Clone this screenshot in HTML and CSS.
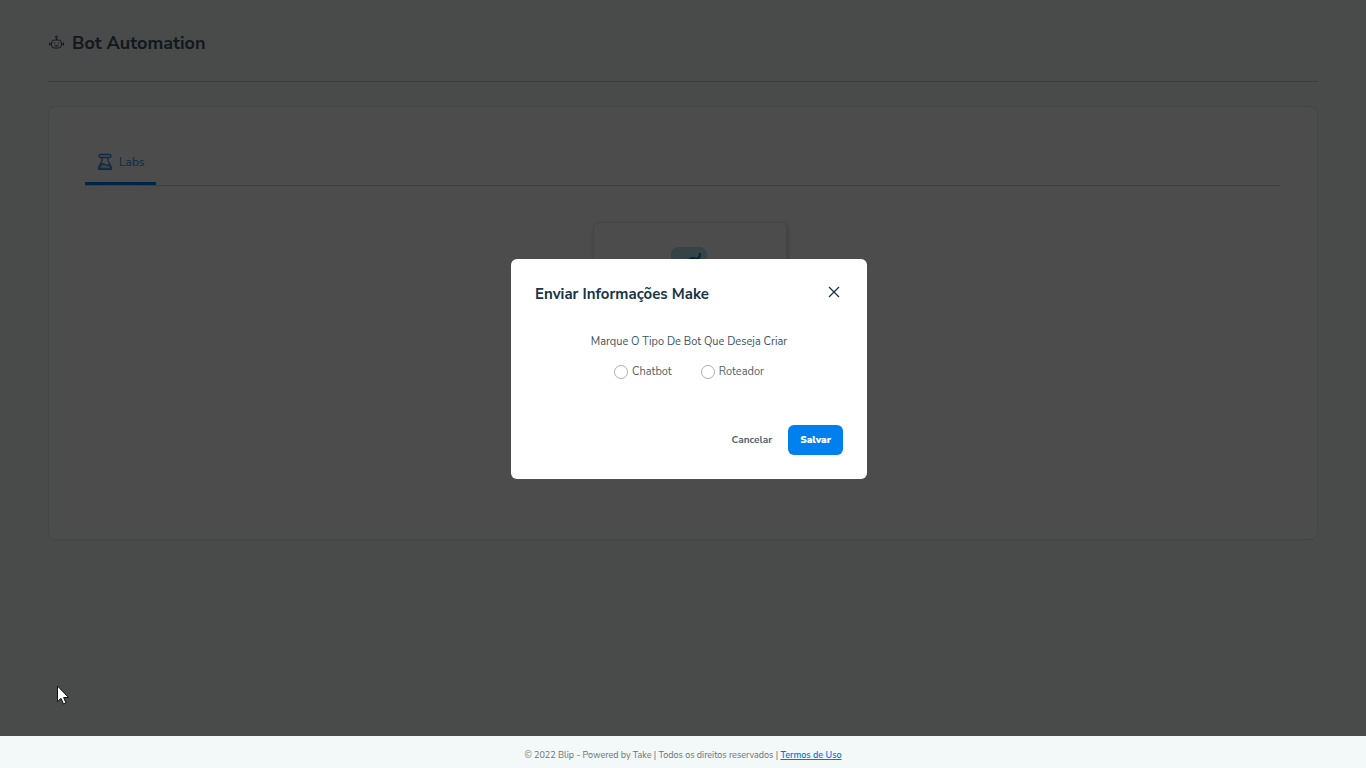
FILE: index.html
```html
<!DOCTYPE html>
<html lang="pt-BR">
<head>
<meta charset="utf-8">
<meta name="viewport" content="width=device-width, initial-scale=1">
<title>Bot Automation</title>
<link rel="stylesheet" href="styles.css">
</head>
<body>
<div class="page">
  <main class="content">
    <header class="page-header">
      <svg class="robot" viewBox="0 0 16 16" fill="none" stroke="currentColor" aria-hidden="true">
        <rect x="3" y="5" width="10" height="8" rx="3"/>
        <path d="M8 5V3M1 7.500v3M15 7.500v3M1 9h2M13 9h2M6 10.800h4"/>
        <circle cx="8" cy="2" r="1"/>
        <path d="M6 7.500v1.200M10 7.500v1.200"/>
      </svg>
      <h1 class="page-title">Bot Automation</h1>
    </header>
    <section class="panel">
      <nav class="tabs">
        <a class="tab" href="#labs">
          <svg class="flask" viewBox="0 0 16 18" fill="none" stroke="currentColor" stroke-width="1.300" aria-hidden="true">
            <rect x="2" y="1.500" width="12" height="3" rx="1.500"/>
            <path d="M5 4.500v3L1.600 14.500Q1 16.300 2.800 16.300H13.200Q15 16.300 14.400 14.500L11 7.500V4.500"/>
            <path d="M4 11.500Q6 10 8 11.500T12.500 11.500L14 16H2Z" fill="currentColor" fill-opacity=".3"/>
          </svg>
          <span>Labs</span>
        </a>
      </nav>
      <div class="labs" id="labs">
        <article class="lab-card">
          <svg class="lab-icon" viewBox="0 0 38 38" fill="none" aria-hidden="true">
            <rect class="lab-icon-bg" width="36" height="36" rx="7"/>
            <path d="M15 15Q21 9 25 12Q29 12 29 6M15 13Q18 12 20 13" stroke="currentColor" stroke-width="2"/>
          </svg>
        </article>
      </div>
    </section>
  </main>
  <div class="overlay">
    <form class="modal" role="dialog" aria-labelledby="modal-title">
      <div class="modal-header">
        <h2 class="modal-title" id="modal-title">Enviar Informações Make</h2>
        <button class="close" type="button" aria-label="Fechar">
          <svg viewBox="0 0 12 12" fill="none" stroke="currentColor" stroke-width="1.300" aria-hidden="true"><path d="M1 1l10 10M11 1L1 11"/></svg>
        </button>
      </div>
      <fieldset class="bot-type">
        <legend class="question">Marque O Tipo De Bot Que Deseja Criar</legend>
        <div class="options">
          <label class="option"><input class="radio" type="radio" name="bot" value="chatbot">Chatbot</label>
          <label class="option"><input class="radio" type="radio" name="bot" value="roteador">Roteador</label>
        </div>
      </fieldset>
      <div class="actions">
        <button class="button" type="button">Cancelar</button>
        <button class="button primary" type="submit">Salvar</button>
      </div>
    </form>
  </div>
  <svg class="pointer" viewBox="0 0 12 20" aria-hidden="true"><path d="M.5 1V16.500L4 13.300L6.500 19L9 18L6.600 12.500H11.500Z" fill="#fff" stroke="#111"/></svg>
</div>
<footer class="footer">
  <p>© 2022 Blip - Powered by Take | Todos os direitos reservados | <a class="terms" href="#termos">Termos de Uso</a></p>
</footer>
</body>
</html>
```
FILE: styles.css
```css
* { box-sizing: border-box; }
body {
  margin: 0;
  min-height: 100vh;
  display: flex;
  flex-direction: column;
  font-family: "Nunito Sans", "Noto Sans", sans-serif;
  font-size: 11px;
  color: #52636c;
  background: #f3f9f9;
}
h1, h2, p { margin: 0; }
button { font: inherit; color: inherit; border: 0; background: none; cursor: pointer; }
.page { position: relative; flex: 1; }
.content { padding: 0 48px; }
.page-header {
  display: flex;
  align-items: center;
  gap: 7px;
  height: 82px;
  padding-top: 4px;
  border-bottom: 1px solid #c4cecf;
  color: #3f5360;
}
.robot { width: 17px; height: 16px; }
.page-title { font-size: 18px; line-height: 24px; font-weight: 700; }
.panel {
  margin: 24px 0;
  min-height: 434px;
  padding: 32px 36px;
  background: #fff;
  border: 1px solid #e3eaeb;
  border-radius: 8px;
}
.tabs { display: flex; border-bottom: 1px solid #ccd2d5; }
.tab {
  display: flex;
  align-items: center;
  gap: 6px;
  height: 46px;
  padding: 2px 11px 0 12px;
  border-bottom: 3px solid #0080ee;
  color: #2f8fe4;
  font-size: 12px;
  text-decoration: none;
}
.flask { width: 16px; height: 18px; }
.labs { display: flex; justify-content: center; padding: 36px 0 0 14px; }
.lab-card {
  width: 194px;
  height: 194px;
  padding-top: 24px;
  text-align: center;
  border: 1px solid #e4e4e4;
  border-radius: 6px;
  box-shadow: 1px 1px 4px #ccc;
}
.lab-icon { width: 38px; height: 38px; color: #0072d8; }
.lab-icon-bg { fill: #b9e3ee; }
.overlay {
  position: absolute;
  inset: 0;
  display: flex;
  align-items: center;
  justify-content: center;
  padding: 2px 0 0 12px;
  background: rgba(0, 0, 0, .7);
}
.modal {
  width: 356px;
  padding: 24px;
  background: #fff;
  border-radius: 6px;
}
.modal-header { display: flex; justify-content: space-between; align-items: flex-start; }
.modal-title { font-size: 15px; line-height: 22px; font-weight: 700; color: #183447; }
.close { width: 18px; height: 18px; padding: 3px; color: #183447; }
.close svg { display: block; width: 12px; height: 12px; }
.bot-type { margin: 28px 0 0; padding: 0; border: 0; text-align: center; }
.question { width: 100%; padding: 0; line-height: 18px; color: #40545f; }
.options { display: flex; justify-content: center; gap: 29px; padding-top: 12px; }
.option { display: flex; align-items: center; gap: 4px; line-height: 18px; }
.radio {
  appearance: none;
  width: 14px;
  height: 14px;
  margin: 0;
  border: 1px solid #aab0b3;
  border-radius: 50%;
  background: #fff;
}
.radio:checked { border: 4px solid #0080ee; }
.actions { display: flex; justify-content: flex-end; gap: 4px; margin-top: 44px; }
.button { height: 30px; padding: 0 12px; border-radius: 6px; font-size: 10px; font-weight: 700; }
.primary { background: #0080ee; color: #fff; font-weight: 900; }
.pointer { position: absolute; left: 57px; top: 685px; width: 12px; height: 20px; }
.footer {
  display: flex;
  align-items: center;
  justify-content: center;
  min-height: 32px;
  padding-top: 6px;
  font-size: 9px;
  line-height: 14px;
  color: #6a7378;
  background: #f3f9f9;
}
.terms { color: #0078e7; font-weight: 600; }
```
